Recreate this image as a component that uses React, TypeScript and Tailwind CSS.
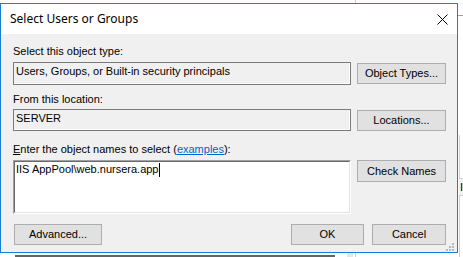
import React from "react";

const btn =
  "flex items-center justify-center w-[89px] h-[21px] bg-[#e1e1e1] border border-[#adadad] text-[11px] text-black leading-none";

function Grip() {
  const dots = [
    [6, 0],
    [3, 3],
    [6, 3],
    [0, 6],
    [3, 6],
    [6, 6],
  ];
  return (
    <svg width="8" height="8" viewBox="0 0 8 8" className="absolute right-[3px] bottom-[1px]">
      {dots.map(([x, y], i) => (
        <rect key={i} x={x} y={y} width="2" height="2" fill="#b8b8b8" />
      ))}
    </svg>
  );
}

export default function App() {
  return (
    <div
      className="relative w-[463px] h-[257px] bg-white overflow-hidden"
      style={{ fontFamily: '"Liberation Sans", Arial, sans-serif' }}
    >
      {/* background window remnants */}
      <div className="absolute left-[355px] top-0 w-px h-[3px] bg-[#cfcfcf]" />
      <div className="absolute left-[458px] top-[15px] w-[5px] h-px bg-[#a0a0a0]" />
      <div className="absolute left-[459px] top-[135px] w-px h-[122px] bg-[#d0d0d0]" />
      <div className="absolute left-[459px] top-[178px] w-[4px] h-[18px] border-y border-[#cfcfcf] bg-[#f0f0f0] text-[11px] leading-[16px] pl-[1px]">
        Il
      </div>
      <div className="absolute left-[15px] top-[255px] w-[320px] h-[2px] bg-[#646464]" />
      <div className="absolute left-[347px] top-[253px] w-[6px] h-[4px] bg-[#e6e6e6]" />
      <div className="absolute left-[355px] top-[253px] w-px h-[4px] bg-[#cfcfcf]" />

      {/* dialog window */}
      <div className="absolute left-0 top-[3px] w-[458px] h-[250px] border border-[#1a7fd4] flex flex-col bg-[#f0f0f0]">
        {/* title bar */}
        <div className="h-[30px] bg-white flex items-center justify-between shrink-0">
          <span
            className="pl-[9px] text-[12px] text-black"
            style={{ fontFamily: '"Noto Sans", "Open Sans", sans-serif' }}
          >
            Select Users or Groups
          </span>
          <svg width="11" height="11" viewBox="0 0 11 11" className="mr-[9px]">
            <path d="M0.5 0.5 L10.5 10.5 M10.5 0.5 L0.5 10.5" stroke="#000" strokeWidth="1" />
          </svg>
        </div>

        {/* client */}
        <div className="relative flex-1 flex flex-col pl-[12px] pr-[11px] pt-[11px] text-[11px] text-black">
          <div className="h-[13px] leading-[13px]">Select this object type:</div>
          <div className="mt-[4px] flex items-center gap-[6px]">
            <div className="w-[338px] h-[23px] border border-[#7a7a7a] bg-[#f0f0f0] shadow-[inset_-1px_-1px_0_#ffffff] pl-[2px] pt-[2px] leading-[13px]">
              Users, Groups, or Built-in security principals
            </div>
            <div className={btn}>Object Types...</div>
          </div>

          <div className="mt-[8px] h-[13px] leading-[13px]">From this location:</div>
          <div className="mt-[3px] flex items-center gap-[6px]">
            <div className="w-[338px] h-[22px] border border-[#7a7a7a] bg-[#f0f0f0] shadow-[inset_-1px_-1px_0_#ffffff] pl-[2px] pt-[2px] leading-[13px]">
              SERVER
            </div>
            <div className={btn}>Locations...</div>
          </div>

          <div className="mt-[12px] h-[13px] leading-[13px]">
            <span className="underline">E</span>nter the object names to select (
            <span className="text-[#0066cc] underline">examples</span>):
          </div>
          <div className="mt-[4px] flex items-start gap-[6px]">
            <div className="w-[338px] h-[54px] bg-white border-t border-l border-[#a0a0a0] border-r border-b border-r-white border-b-white">
              <div className="h-full border-t border-l border-[#696969] border-r border-b border-r-[#e3e3e3] border-b-[#e3e3e3] pl-[1px] pt-[1px] leading-[13px] flex items-start">
                <span>IIS AppPool\web.nursera.app</span>
                <span className="inline-block w-px h-[14px] bg-black ml-[1px]" />
              </div>
            </div>
            <div className={btn + " h-[22px]"}>Check Names</div>
          </div>

          <div className="mt-[10px] flex items-center">
            <div className="flex items-center justify-center w-[88px] h-[21px] bg-[#e1e1e1] border border-[#adadad] ml-[1px]">
              Advanced...
            </div>
            <div className="flex-1" />
            <div className="flex items-center justify-center w-[73px] h-[21px] bg-[#e1e1e1] border border-[#adadad]">
              OK
            </div>
            <div className="flex items-center justify-center w-[74px] h-[21px] bg-[#e1e1e1] border border-[#adadad] ml-[8px]">
              Cancel
            </div>
          </div>
          <Grip />
        </div>
      </div>
    </div>
  );
}
